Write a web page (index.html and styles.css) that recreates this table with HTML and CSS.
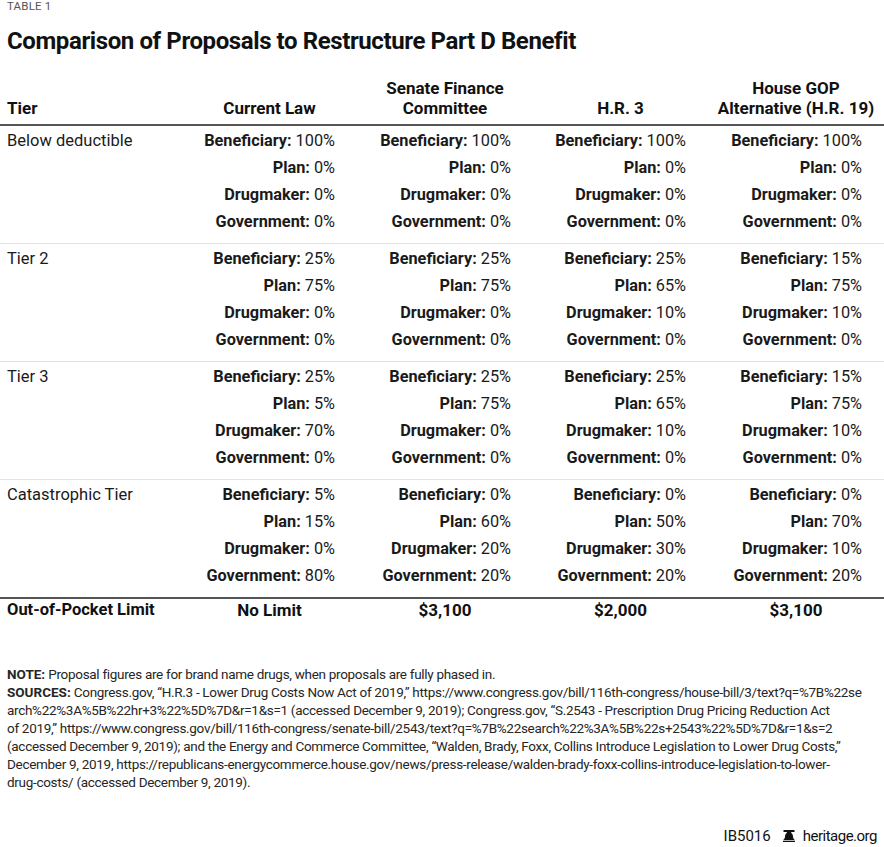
FILE: index.html
```html
<!DOCTYPE html>
<html>
<head>
<meta charset="utf-8">
<link rel="stylesheet" href="styles.css">
</head>
<body>
<div class="page">
  <div class="kicker">TABLE 1</div>
  <h1 class="title">Comparison of Proposals to Restructure Part D Benefit</h1>
  <table class="grid">
    <colgroup>
      <col class="c0"><col class="c1"><col class="c2"><col class="c3"><col class="c4">
    </colgroup>
    <thead>
      <tr>
        <th class="tier-h">Tier</th>
        <th>Current Law</th>
        <th>Senate Finance<br>Committee</th>
        <th>H.R. 3</th>
        <th>House GOP<br>Alternative (H.R. 19)</th>
      </tr>
    </thead>
    <tbody>
      <tr>
        <td class="tier">Below deductible</td>
        <td><div><b>Beneficiary:</b> 100%</div><div><b>Plan:</b> 0%</div><div><b>Drugmaker:</b> 0%</div><div><b>Government:</b> 0%</div></td>
        <td><div><b>Beneficiary:</b> 100%</div><div><b>Plan:</b> 0%</div><div><b>Drugmaker:</b> 0%</div><div><b>Government:</b> 0%</div></td>
        <td><div><b>Beneficiary:</b> 100%</div><div><b>Plan:</b> 0%</div><div><b>Drugmaker:</b> 0%</div><div><b>Government:</b> 0%</div></td>
        <td><div><b>Beneficiary:</b> 100%</div><div><b>Plan:</b> 0%</div><div><b>Drugmaker:</b> 0%</div><div><b>Government:</b> 0%</div></td>
      </tr>
      <tr>
        <td class="tier">Tier 2</td>
        <td><div><b>Beneficiary:</b> 25%</div><div><b>Plan:</b> 75%</div><div><b>Drugmaker:</b> 0%</div><div><b>Government:</b> 0%</div></td>
        <td><div><b>Beneficiary:</b> 25%</div><div><b>Plan:</b> 75%</div><div><b>Drugmaker:</b> 0%</div><div><b>Government:</b> 0%</div></td>
        <td><div><b>Beneficiary:</b> 25%</div><div><b>Plan:</b> 65%</div><div><b>Drugmaker:</b> 10%</div><div><b>Government:</b> 0%</div></td>
        <td><div><b>Beneficiary:</b> 15%</div><div><b>Plan:</b> 75%</div><div><b>Drugmaker:</b> 10%</div><div><b>Government:</b> 0%</div></td>
      </tr>
      <tr>
        <td class="tier">Tier 3</td>
        <td><div><b>Beneficiary:</b> 25%</div><div><b>Plan:</b> 5%</div><div><b>Drugmaker:</b> 70%</div><div><b>Government:</b> 0%</div></td>
        <td><div><b>Beneficiary:</b> 25%</div><div><b>Plan:</b> 75%</div><div><b>Drugmaker:</b> 0%</div><div><b>Government:</b> 0%</div></td>
        <td><div><b>Beneficiary:</b> 25%</div><div><b>Plan:</b> 65%</div><div><b>Drugmaker:</b> 10%</div><div><b>Government:</b> 0%</div></td>
        <td><div><b>Beneficiary:</b> 15%</div><div><b>Plan:</b> 75%</div><div><b>Drugmaker:</b> 10%</div><div><b>Government:</b> 0%</div></td>
      </tr>
      <tr class="last">
        <td class="tier">Catastrophic Tier</td>
        <td><div><b>Beneficiary:</b> 5%</div><div><b>Plan:</b> 15%</div><div><b>Drugmaker:</b> 0%</div><div><b>Government:</b> 80%</div></td>
        <td><div><b>Beneficiary:</b> 0%</div><div><b>Plan:</b> 60%</div><div><b>Drugmaker:</b> 20%</div><div><b>Government:</b> 20%</div></td>
        <td><div><b>Beneficiary:</b> 0%</div><div><b>Plan:</b> 50%</div><div><b>Drugmaker:</b> 30%</div><div><b>Government:</b> 20%</div></td>
        <td><div><b>Beneficiary:</b> 0%</div><div><b>Plan:</b> 70%</div><div><b>Drugmaker:</b> 10%</div><div><b>Government:</b> 20%</div></td>
      </tr>
    </tbody>
    <tfoot>
      <tr>
        <td class="tier">Out-of-Pocket Limit</td>
        <td>No Limit</td>
        <td>$3,100</td>
        <td>$2,000</td>
        <td>$3,100</td>
      </tr>
    </tfoot>
  </table>
  <div class="notes">
    <div><b>NOTE:</b> Proposal figures are for brand name drugs, when proposals are fully phased in.</div>
    <div><b>SOURCES:</b> Congress.gov, “H.R.3 - Lower Drug Costs Now Act of 2019,” https://www.congress.gov/bill/116th-congress/house-bill/3/text?q=%7B%22se</div>
    <div>arch%22%3A%5B%22hr+3%22%5D%7D&amp;r=1&amp;s=1 (accessed December 9, 2019); Congress.gov, “S.2543 - Prescription Drug Pricing Reduction Act</div>
    <div>of 2019,” https://www.congress.gov/bill/116th-congress/senate-bill/2543/text?q=%7B%22search%22%3A%5B%22s+2543%22%5D%7D&amp;r=1&amp;s=2</div>
    <div>(accessed December 9, 2019); and the Energy and Commerce Committee, “Walden, Brady, Foxx, Collins Introduce Legislation to Lower Drug Costs,”</div>
    <div>December 9, 2019, https://republicans-energycommerce.house.gov/news/press-release/walden-brady-foxx-collins-introduce-legislation-to-lower-</div>
    <div>drug-costs/ (accessed December 9, 2019).</div>
  </div>
  <div class="credit">
    <span class="ib">IB5016</span>
    <svg class="bell" width="12" height="12" viewBox="0 0 12 12" aria-hidden="true">
      <rect x="0.5" y="0" width="11" height="2" fill="#111"/>
      <path d="M3.8 2 L8.2 2 L8.2 3 C9.8 3.5 9.9 5.5 10.1 7.3 C10.3 8.8 11.2 9.3 11.8 9.9 L0.2 9.9 C0.8 9.3 1.7 8.8 1.9 7.3 C2.1 5.5 2.2 3.5 3.8 3 Z" fill="#111"/>
      <rect x="0" y="10.7" width="12" height="1.3" fill="#111"/>
    </svg>
    <span class="site">heritage.org</span>
  </div>
</div>
</body>
</html>
```

FILE: styles.css
```css
* { box-sizing: border-box; }
html, body { margin: 0; padding: 0; background: #fff; }
body {
  font-family: Roboto, "Liberation Sans", sans-serif;
  color: #1a1a1a;
}
.page {
  width: 884px;
  height: 847px;
  display: flex;
  flex-direction: column;
}
.kicker {
  font-size: 11.5px;
  line-height: 10px;
  padding-top: 1px;
  color: #555;
  padding-left: 7px;
  letter-spacing: 0.2px;
}
.title {
  margin: 16px 0 0 0;
  padding-left: 7px;
  font-size: 24px;
  line-height: 28px;
  font-weight: 700;
  letter-spacing: -0.4px;
  color: #111;
}
.grid {
  margin-top: 23px;
  width: 884px;
  border-collapse: collapse;
  table-layout: fixed;
}
.c0 { width: 182px; }
.c1 { width: 175px; }
.c2 { width: 176px; }
.c3 { width: 175px; }
.c4 { width: 176px; }
.grid th {
  font-size: 17px;
  line-height: 20px;
  font-weight: 700;
  text-align: center;
  vertical-align: bottom;
  padding: 0 0 6px 0;
  border-bottom: 2px solid #555;
  color: #111;
}
.grid th.tier-h { text-align: left; padding-left: 7px; }
.grid tbody td {
  font-size: 16.3px;
  line-height: 27px;
  text-align: right;
  vertical-align: top;
  padding: 1px 22px 8px 0;
  border-bottom: 1px solid #e3e3e3;
  color: #1a1a1a;
}
.grid tbody tr.last td { border-bottom: 2px solid #555; }
.grid td.tier { text-align: left; padding-left: 7px; font-size: 16.5px; }
.grid td b { font-weight: 700; }
.grid tfoot td {
  font-size: 17px;
  line-height: 20px;
  font-weight: 700;
  text-align: center;
  padding: 1px 0 0 0;
  color: #111;
}
.grid tfoot td.tier { text-align: left; padding-left: 7px; }
.notes {
  margin-top: 45px;
  padding-left: 7px;
  font-size: 13.5px;
  line-height: 18px;
  letter-spacing: -0.3px;
  color: #262626;
  white-space: nowrap;
}
.notes b { font-weight: 700; letter-spacing: 0; }
.credit {
  margin-top: auto;
  margin-bottom: 1px;
  align-self: flex-end;
  padding-right: 7px;
  display: flex;
  align-items: center;
  font-size: 15px;
  line-height: 20px;
  color: #111;
}
.ib { margin-right: 12px; }
.site { margin-left: 8px; letter-spacing: -0.5px; }
.bell { display: block; }
```
